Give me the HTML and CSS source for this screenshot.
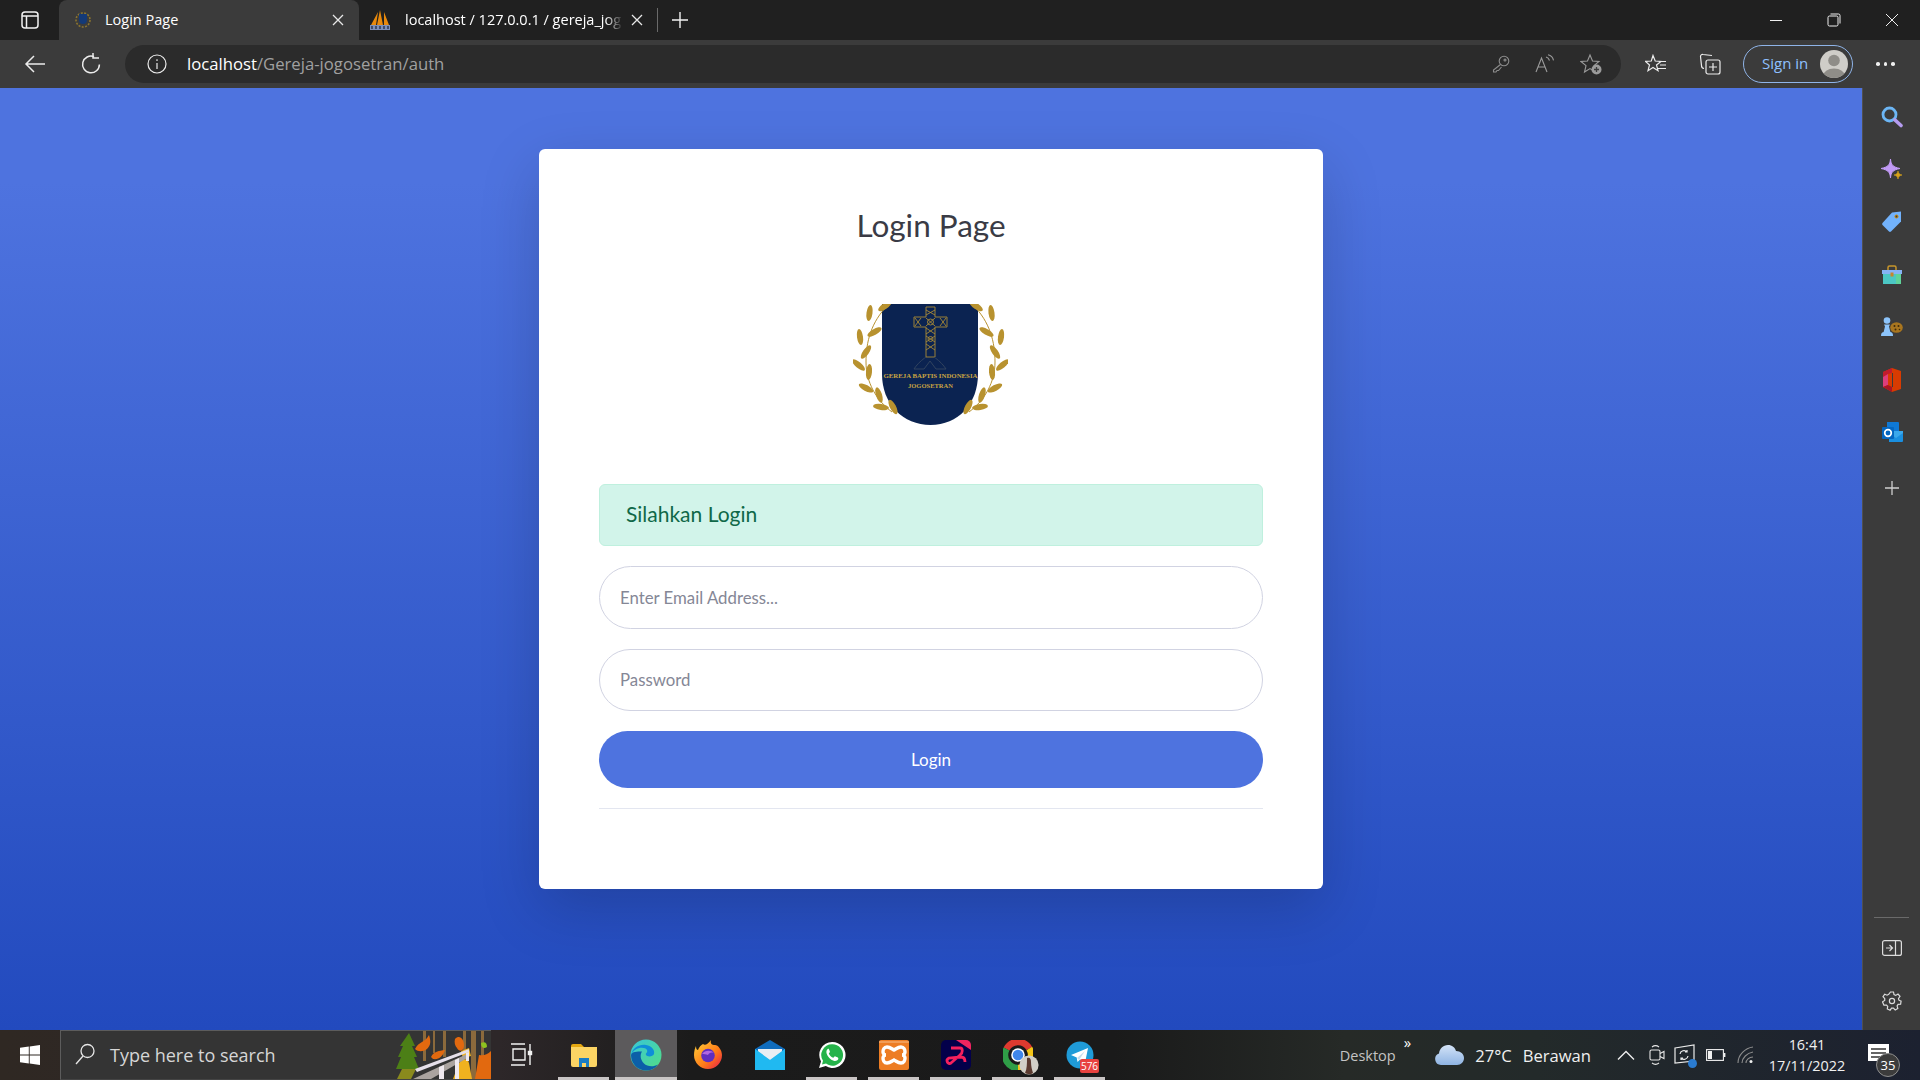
FILE: index.html
```html
<!DOCTYPE html>
<html lang="id">
<head>
  <meta charset="UTF-8" />
  <meta name="viewport" content="width=device-width, initial-scale=1" />
  <title>Login Page</title>
  <link rel="stylesheet" href="styles.css">
</head>

<body>
  <!-- Tab strip -->
  <div class="tabstrip">
    <div class="tab-menu">
      <svg width="18" height="18" viewBox="0 0 18 18" fill="none" stroke="#f2f2f2" stroke-width="1.5"><rect x="1" y="1" width="16" height="16" rx="3"/><path d="M1 5h16M5.500 5v12"/></svg>
    </div>
    <div class="tab tab-active">
      <svg class="tab-icon" width="16" height="16" viewBox="0 0 16 16"><circle cx="8" cy="8" r="7" fill="none" stroke="#8a7430" stroke-dasharray="2 1.400" stroke-width="1.600"/><path d="M4 2h8v6a4 4 0 0 1-8 0z" fill="#143a78"/></svg>
      <span class="tab-title">Login Page</span>
      <svg class="tab-close" width="12" height="12" viewBox="0 0 12 12" stroke="#e8e8e8" stroke-width="1.300"><path d="M1 1l10 10M11 1L1 11"/></svg>
    </div>
    <div class="tab tab-back">
      <svg class="tab-icon" width="22" height="22" viewBox="0 0 22 22"><path d="M2 16 9 3l-2 13zM8 16 11 1l3 15zM15 3l5 13h-5z" fill="#e8890c"/><path d="M1 16h20v5H1z" fill="#7d8fb8"/><path d="M3 17v3M7 17v3M11 17v3M15 17v3M19 17v3" stroke="#26324f" stroke-width="1.400"/></svg>
      <span class="tab-title tab-title-fade">localhost / 127.0.0.1 / gereja_jog</span>
      <svg class="tab-close" width="12" height="12" viewBox="0 0 12 12" stroke="#e8e8e8" stroke-width="1.300"><path d="M1 1l10 10M11 1L1 11"/></svg>
    </div>
    <div class="tab-sep"></div>
    <div class="tab-new">
      <svg width="18" height="18" viewBox="0 0 18 18" stroke="#f2f2f2" stroke-width="1.400"><path d="M9 1v16M1 9h16"/></svg>
    </div>
    <div class="window-btns">
      <svg width="14" height="14" viewBox="0 0 14 14" stroke="#f0f0f0" stroke-width="1"><path d="M1 7.500h12"/></svg>
      <svg width="14" height="14" viewBox="0 0 14 14" fill="none" stroke="#f0f0f0" stroke-width="1"><rect x="1" y="3" width="10" height="10" rx="1.500"/><path d="M3.500 1h8a1.500 1.500 0 0 1 1.500 1.500v8"/></svg>
      <svg width="14" height="14" viewBox="0 0 14 14" stroke="#f0f0f0" stroke-width="1"><path d="M1 1l12 12M13 1L1 13"/></svg>
    </div>
  </div>

  <!-- Toolbar -->
  <div class="toolbar">
    <div class="nav-btn">
      <svg width="22" height="20" viewBox="0 0 22 20" fill="none" stroke="#ececec" stroke-width="1.500"><path d="M21 10H2M10 2l-8 8 8 8"/></svg>
    </div>
    <div class="nav-btn">
      <svg width="20" height="22" viewBox="0 0 20 22" fill="none" stroke="#ececec" stroke-width="1.500"><path d="M13 3.600A8.400 8.400 0 1 0 18.400 11.500"/><path d="M12 0v5h6"/></svg>
    </div>
    <div class="address">
      <svg class="address-info" width="20" height="20" viewBox="0 0 20 20" fill="none" stroke="#ececec" stroke-width="1.200"><circle cx="10" cy="10" r="9"/><path d="M10 9v6M10 5.200v1.800"/></svg>
      <span class="url"><span class="url-host">localhost</span>/Gereja-jogosetran/auth</span>
      <div class="address-icons">
        <svg width="18" height="18" viewBox="0 0 18 18" fill="none" stroke="#8d8d8d" stroke-width="1.100"><circle cx="12" cy="6" r="4.800"/><path d="M8.500 9.500 1.500 15v2h2.500l1-1.500h1.500l3-3.500"/><circle cx="13" cy="5" r="1"/></svg>
        <svg width="20" height="20" viewBox="0 0 20 20" fill="none" stroke="#9b9b9b" stroke-width="1.100"><path d="M1 18 6.500 4 12 18M3 13h7"/><path d="M11 3c2 .5 3 2 3.500 3.500M13 .8c3 .6 5 3 5.500 5.500"/></svg>
        <svg width="22" height="22" viewBox="0 0 22 22" fill="none" stroke="#9b9b9b" stroke-width="1.100"><path d="M10 2l2.500 6 6.500.5-5 4.200 1.500 6.300-5.500-3.400L4.500 19 6 12.700 1 8.500 7.500 8z"/><circle cx="16.500" cy="16.500" r="5" fill="#9b9b9b" stroke="none"/><path d="M16.500 14v5M14 16.500h5" stroke="#3b3b3b" stroke-width="1.300"/></svg>
      </div>
    </div>
    <div class="tool-btn tool-first">
      <svg width="22" height="20" viewBox="0 0 22 20" fill="none" stroke="#ececec" stroke-width="1.200"><path d="M8 1.500l2.200 5.500 5.800.4-4.500 3.600 1.500 5.700-5-3.200-5 3.200 1.500-5.700L0.500 7.400l5.800-.4z"/><path d="M14 7.500h7M15 11h6M12.500 14.500H21"/></svg>
    </div>
    <div class="tool-btn">
      <svg width="22" height="22" viewBox="0 0 22 22" fill="none" stroke="#ececec" stroke-width="1.200"><path d="M13 2.500 4 1.500a2 2 0 0 0-2.500 2l1 9a3 3 0 0 0 2.500 3"/><rect x="7" y="7" width="14" height="14" rx="2"/><path d="M14 10v8M10 14h8"/></svg>
    </div>
    <div class="signin">
      <span class="signin-text">Sign in</span>
      <svg class="avatar" width="28" height="28" viewBox="0 0 28 28"><defs><clipPath id="av"><circle cx="14" cy="14" r="14"/></clipPath></defs><circle cx="14" cy="14" r="14" fill="#cfcdc8"/><g clip-path="url(#av)" fill="#8f8d88"><circle cx="14" cy="10.500" r="5.800"/><ellipse cx="14" cy="26" rx="11" ry="7.500"/></g></svg>
    </div>
    <div class="more-btn"><i></i><i></i><i></i></div>
  </div>

  <div class="middle">
    <!-- Login page -->
    <main class="page">
      <div class="card">
        <h1 class="card-title">Login Page</h1>
        <svg class="logo" width="155" height="121" viewBox="0 0 155 121">
          <defs>
            <ellipse id="leaf" rx="3" ry="8" fill="#b8922f"/>
            <g id="laurel">
              <use href="#leaf" transform="translate(16.500 9) rotate(8)"/>
              <use href="#leaf" transform="translate(21.500 28) rotate(60)"/>
              <use href="#leaf" transform="translate(7 33) rotate(-8)"/>
              <use href="#leaf" transform="translate(13 48) rotate(35)"/>
              <use href="#leaf" transform="translate(5.500 61) rotate(-50)"/>
              <use href="#leaf" transform="translate(16 68) rotate(5)"/>
              <use href="#leaf" transform="translate(13 84) rotate(-62)"/>
              <use href="#leaf" transform="translate(26 91) rotate(-18)"/>
              <use href="#leaf" transform="translate(28 103) rotate(-82)"/>
              <use href="#leaf" transform="translate(40 103) rotate(-28)"/>
              <use href="#leaf" transform="translate(32 2) rotate(55)"/>
              <path d="M35 1C18 18 13 38 13 58c0 20 10 38 26 50" fill="none" stroke="#b8922f" stroke-width="1"/>
            </g>
          </defs>
          <path d="M29 0H125V70C125 100 105 121 77.500 121C50 121 29 100 29 70Z" fill="#0b2351"/>
          <use href="#laurel"/>
          <use href="#laurel" transform="translate(155 0) scale(-1 1)"/>
          <g fill="none" stroke="#a98a35" stroke-width=".9">
            <path d="M73 3h9v10h12v10H82v30h-9V23H61V13h12z"/>
            <path d="M73 6l9 5M82 6l-9 5M62 14l6 8M68 14l-6 8M87 14l6 8M93 14l-6 8M73 14l9 8M82 14l-9 8M73 24l9 6M82 24l-9 6M73 32l9 6M82 32l-9 6M73 40l9 6M82 40l-9 6"/>
            <circle cx="77.500" cy="18" r="3"/><circle cx="77.500" cy="35" r="2.500"/>
          </g>
          <path d="M73 53c-4 3-8 6-12 12h10l6-8 6 8h10c-4-6-8-9-12-12" fill="none" stroke="#31435f" stroke-width="1"/>
          <text class="logo-text" x="77.500" y="74" text-anchor="middle" textLength="94" lengthAdjust="spacingAndGlyphs">GEREJA BAPTIS INDONESIA</text>
          <text class="logo-text" x="77.500" y="84" text-anchor="middle" textLength="45" lengthAdjust="spacingAndGlyphs">JOGOSETRAN</text>
        </svg>
        <div class="alert-ok">Silahkan Login</div>
        <form class="login-form" onsubmit="return false">
          <input class="field" type="text" placeholder="Enter Email Address...">
          <input class="field" type="password" placeholder="Password">
          <button class="btn-login" type="submit">Login</button>
        </form>
        <hr class="divider">
      </div>
    </main>

    <!-- Edge sidebar -->
    <aside class="sidebar">
      <div class="side-item">
        <svg width="22" height="22" viewBox="0 0 22 22" fill="none"><circle cx="8.500" cy="8.500" r="6.500" stroke="#6cb6f5" stroke-width="2.800"/><path d="M14 14l6 5.500" stroke="#b59cf0" stroke-width="3.600" stroke-linecap="round"/></svg>
      </div>
      <div class="side-item">
        <svg width="22" height="22" viewBox="0 0 22 22"><path d="M9.500 0C10 6 12 8 19 9.500 12 11 10 13 9.500 19 9 13 7 11 0 9.500 7 8 9 6 9.500 0z" fill="#c19af5" stroke="#c19af5"/><path d="M17 12c.4 2.400 1.400 3.400 4 4-2.600.6-3.600 1.600-4 4-.4-2.400-1.400-3.400-4-4 2.600-.6 3.600-1.600 4-4z" fill="#d9a21b" stroke="#d9a21b" stroke-width=".6"/></svg>
      </div>
      <div class="side-item">
        <svg width="22" height="22" viewBox="0 0 22 22"><path d="M11 1.500 20 0.500v10L10 20.500a1.500 1.500 0 0 1-2 0L1.500 14a1.500 1.500 0 0 1 0-2z" fill="#72b2fb"/><circle cx="15.500" cy="5.500" r="2" fill="#c78a13"/><circle cx="15.500" cy="5.500" r=".9" fill="#2c3b52"/></svg>
      </div>
      <div class="side-item">
        <svg width="22" height="20" viewBox="0 0 22 20"><path d="M7 5V2.500A1.500 1.500 0 0 1 8.500 1h5A1.500 1.500 0 0 1 15 2.500V5" fill="none" stroke="#c8962b" stroke-width="1.500"/><path d="M1 5h20v4H1z" fill="#86b3f5"/><path d="M2 9h18v10H2z" fill="#4cc7c4"/><path d="M15 9h5v10h-5z" fill="#5fd39a"/><rect x="9.500" y="7.500" width="3" height="4" fill="#c8862b"/></svg>
      </div>
      <div class="side-item">
        <svg width="23" height="20" viewBox="0 0 23 20"><circle cx="7" cy="3.500" r="3.300" fill="#8cc4fb"/><path d="M4 7.500h6l-1 2 1.500 6H3.500l1.500-6z" fill="#8cc4fb"/><path d="M1 19c0-3 1-4 3-4h6c2 0 3 1 3 4z" fill="#8cc4fb"/><ellipse cx="16.500" cy="10.500" rx="6.300" ry="5.300" fill="#a9761f"/><circle cx="14.500" cy="9" r="1" fill="#3f2a0c"/><circle cx="18.500" cy="9" r="1" fill="#3f2a0c"/><circle cx="15.500" cy="12.500" r="1" fill="#3f2a0c"/><circle cx="19.500" cy="12.500" r=".8" fill="#3f2a0c"/></svg>
      </div>
      <div class="side-item">
        <svg width="20" height="24" viewBox="0 0 20 24"><path d="M10 0 1 4v15l9 5 9-3V3z" fill="#d83b01"/><path d="M10 0 1 4v15l5-2V6l4-1z" fill="#c11c2d"/><path d="M1 9l5-3v11l-5 2z" fill="#dc3e7b"/><path d="M6 17l4 2v5l-9-5z" fill="#a91526"/><path d="M10 5h1v14h-1z" fill="#3b3b3b"/></svg>
      </div>
      <div class="side-item">
        <svg width="22" height="22" viewBox="0 0 22 22"><path d="M6 1h11a1 1 0 0 1 1 1v8H6z" fill="#0f78d4"/><path d="M8 10h14v10a1 1 0 0 1-1 1H8z" fill="#1a8fe0"/><path d="M8 12l7 5 7-5v-2H8z" fill="#3aa8ec"/><rect x="1" y="6" width="12" height="12" rx="1" fill="#0466c0"/><circle cx="7" cy="12" r="3.300" fill="none" stroke="#fff" stroke-width="1.700"/></svg>
      </div>
      <div class="side-item side-plus">
        <svg width="16" height="16" viewBox="0 0 16 16" stroke="#cfcfcf" stroke-width="1.300"><path d="M8 1v14M1 8h14"/></svg>
      </div>
      <div class="side-bottom">
        <div class="side-sep"></div>
        <div class="side-item">
          <svg width="20" height="16" viewBox="0 0 20 16" fill="none" stroke="#dcdcdc" stroke-width="1.200"><rect x=".6" y=".6" width="18.800" height="14.800" rx="2"/><path d="M13.500 1v14M4 8h6M7.500 5l3 3-3 3"/></svg>
        </div>
        <div class="side-item">
          <svg width="20" height="20" viewBox="0 0 20 20" fill="none" stroke="#dcdcdc" stroke-width="1.200"><circle cx="10" cy="10" r="2.600"/><path d="M8.500 1h3l.5 2.600 1.700.8 2.300-1.300 2 2.200-1.500 2.200.4 1.700 2.200 1-.5 2.900-2.500.3-1 1.500.7 2.500-2.600 1.500-1.800-1.800-1.800.1-1.500 2-2.800-1.200.4-2.600-1.200-1.300-2.600.1L.5 10.800l2.200-1.400.1-1.800L1 5.700l1.700-2.500 2.400 1 1.600-.8z"/></svg>
        </div>
      </div>
    </aside>
  </div>

  <!-- Windows taskbar -->
  <footer class="taskbar">
    <div class="start">
      <svg width="20" height="20" viewBox="0 0 20 20" fill="#fff"><path d="M0 2.800 8.800 1.600v8H0zM9.700 1.500 20 0v9.600H9.700zM0 10.500h8.800v8L0 17.200zM9.700 10.500H20V20L9.700 18.500z"/></svg>
    </div>
    <div class="search">
      <svg class="search-glass" width="20" height="24" viewBox="0 0 20 24" fill="none" stroke="#e6e6e6" stroke-width="1.300"><circle cx="12.500" cy="8" r="6.500"/><path d="M8 13 1 21"/></svg>
      <span class="search-text">Type here to search</span>
      <svg class="search-art" width="96" height="48" viewBox="0 0 96 48">
        <path d="M28 0h3v30h-3zM38 0h2v22h-2zM48 0h3v26h-3zM68 0h3v26h-3zM76 0h5v48h-5zM86 0h3v48h-3z" fill="#8b6a3c"/>
        <path d="M20 18c4-8 10-6 14-14 2 6 2 10-2 14-4 3-9 3-12 0zM36 26c3-6 8-6 14-7-2 6-6 10-12 9zM60 8c5-5 9 1 9 6 0 7-5 7-7 3-2-2-3-6-2-9zM84 24c4 1 8 0 12-4v28H80z" fill="#e2690f"/>
        <path d="M64 32c4-4 8-6 10 0l3 16H58z" fill="#f0b21f"/>
        <path d="M66 20l8-3 2 8-8 2z" fill="#f0b21f"/>
        <path d="M86 12c4-2 6 0 6 4-3 2-6 1-6-4z" fill="#8dc21f"/>
        <path d="M14 2l6 13h-3l5 11h-3l5 12H1l5-12H3l5-11H5z" fill="#4c7f16"/>
        <path d="M2 48 7 38h14l-5 10z" fill="#8a8a1d"/>
        <path d="M18 48 74 22v4L36 48z" fill="#aaa39f"/>
        <path d="M20 38 74 18v3L22 41z" fill="#e6e0ea"/>
        <path d="M44 36v12h5V34zM60 29v19h4V27zM71 22v8h3V21z" fill="#eee8ee"/>
      </svg>
    </div>
    <div class="task-item">
      <svg width="24" height="24" viewBox="0 0 24 24" fill="none" stroke="#f2f2f2" stroke-width="1.400"><path d="M1 1h14M3 6h12v11H3zM1 22h14M20 1v7M20 12v10"/><rect x="18.500" y="8.500" width="3" height="3" fill="#f2f2f2"/></svg>
    </div>
    <div class="task-item task-open">
      <svg width="28" height="26" viewBox="0 0 28 26"><path d="M1 4a2 2 0 0 1 2-2h8l3 3H1z" fill="#e5a711"/><path d="M1 5h26v18a2 2 0 0 1-2 2H3a2 2 0 0 1-2-2z" fill="#fcd464"/><path d="M9 16h10v9h-3v-4h-4v4H9z" fill="#1a7dc4"/></svg>
    </div>
    <div class="task-item task-open task-active">
      <svg width="32" height="32" viewBox="0 0 32 32"><defs><linearGradient id="edgeg" x1="0" y1="0" x2="1" y2="1"><stop offset="0" stop-color="#38c6d8"/><stop offset="1" stop-color="#53de83"/></linearGradient></defs><circle cx="16" cy="16" r="15.500" fill="url(#edgeg)"/><path d="M1 17C2 8 10 5 16 6c6 1 9 5 8 9-1 3-7 3-8 1s2-2 1-5C15 7 3 8 1 17z" fill="#0f8ed8"/><path d="M1 16c0 9 7 15.500 15 15.500 5 0 9-2 12-6-5 3-11 2-14-1-4-4-4-9-2-12-5 0-10 0-11 3.500z" fill="#0c5fa8"/></svg>
    </div>
    <div class="task-item">
      <svg width="30" height="30" viewBox="0 0 30 30"><defs><linearGradient id="foxg" x1="0" y1="0" x2="1" y2="1"><stop offset="0" stop-color="#ffd43a"/><stop offset=".6" stop-color="#ff7a18"/><stop offset="1" stop-color="#e5174f"/></linearGradient></defs><path d="M15 29A14 14 0 0 1 1 15C1 11 2 8 3 6c0 3 1 4 2 4 1-3 3-5 5-6 2 2 5 0 8-4-1 4 1 5 4 5s7 5 7 10a14 14 0 0 1-14 14z" fill="url(#foxg)"/><circle cx="15" cy="15.500" r="6.800" fill="#5f2ec0"/><path d="M9 14c3-4 9-4 12-1-3-1-5 0-6 2-2-1-4-1-6-1z" fill="#b067e0"/></svg>
    </div>
    <div class="task-item">
      <svg width="32" height="30" viewBox="0 0 32 30"><path d="M1 9 16 0l15 9v4H1z" fill="#0f6cbd"/><path d="M4 9h24v8L16 23 4 17z" fill="#e9eef3"/><path d="M1 9l15 11L31 9v21H1z" fill="#19b0ef"/><path d="M1 30V9l15 11 15-11v21z" fill="#27c1f4" opacity=".5"/></svg>
    </div>
    <div class="task-item task-open">
      <svg width="28" height="28" viewBox="0 0 28 28"><path d="M14 1A13 13 0 0 0 3 20.500L1 27l6.800-1.900A13 13 0 1 0 14 1z" fill="#fff"/><path d="M14 3.300A10.700 10.700 0 0 0 5 19.800l-1 3.800 4-1A10.700 10.700 0 1 0 14 3.300z" fill="#25b34a"/><path d="M10 7.800c-1.500 1-2 2.800-1.300 5 1 3 3.700 6 7 7 2 .5 3.700 0 4.500-1.500.3-.8.200-1.400-.3-1.700l-2.500-1.200c-.5-.2-.9 0-1.200.4l-.8 1c-2-.7-3.700-2.400-4.600-4.400l.8-.9c.3-.4.400-.8.200-1.200L10.800 8c-.2-.4-.5-.4-.8-.2z" fill="#fff"/></svg>
    </div>
    <div class="task-item task-open">
      <svg width="30" height="30" viewBox="0 0 30 30"><rect width="30" height="30" rx="2" fill="#ed7d24"/><path d="M0 2h30" stroke="#f5b27b" stroke-width="1.200"/><path d="M8 7c3 0 5 2 7 3 2-1 4-3 7-3 3 0 4 3 4 5 0 1-1 3-3 3 2 0 3 2 3 3 0 2-1 5-4 5-3 0-5-2-7-3-2 1-4 3-7 3-3 0-4-3-4-5 0-1 1-3 3-3-2 0-3-2-3-3 0-2 1-5 4-5z" fill="none" stroke="#fff" stroke-width="3.400"/></svg>
    </div>
    <div class="task-item task-open">
      <svg width="30" height="30" viewBox="0 0 30 30"><rect width="30" height="30" rx="5" fill="#03004a"/><path d="M15 0h10a5 5 0 0 1 5 5v5z" fill="#f0245f"/><path d="M10 8h9c3 0 3 5 0 7l-9 8c-3 2-6-3-2-5l12-1c3 0 4 2 4 5" fill="none" stroke="#f5205d" stroke-width="2.800"/></svg>
    </div>
    <div class="task-item task-open">
      <svg width="30" height="30" viewBox="0 0 30 30" fill="none"><path d="M3.500 9A13 13 0 0 1 26.300 8.500" stroke="#de3a2f" stroke-width="6.500"/><path d="M26.300 8.500A13 13 0 0 1 15 28" stroke="#f5c518" stroke-width="6.500"/><path d="M15 28A13 13 0 0 1 3.500 9" stroke="#2f9e47" stroke-width="6.500"/><circle cx="15" cy="15" r="6.800" fill="#fff"/><circle cx="15" cy="15" r="5.300" fill="#3f86ea"/></svg>
      <svg class="chrome-avatar" width="20" height="20" viewBox="0 0 20 20"><circle cx="10" cy="10" r="9.600" fill="#d2cfc7"/><path d="M8 3c3-1 4 1 4 4 0 4 1 8 2 11-3 2-6 1-8 0 2-4 2-10 2-15z" fill="#5b3a30"/></svg>
    </div>
    <div class="task-item task-open">
      <svg width="28" height="28" viewBox="0 0 28 28"><circle cx="14" cy="14" r="13.500" fill="#1f9bd8"/><path d="M5 14 22 7l-3 15-5-3.500-2.500 2.500-.8-4.500z" fill="#fff"/><path d="M11 17l8-7-6 9z" fill="#c7dceb"/></svg>
      <span class="badge-count">576</span>
    </div>

    <div class="tray">
      <span class="tray-desktop">Desktop</span>
      <span class="tray-chevron">»</span>
      <svg class="tray-cloud" width="32" height="22" viewBox="0 0 32 22"><defs><linearGradient id="cloudg" x1="0" y1="0" x2="0" y2="1"><stop offset="0" stop-color="#d3e3f7"/><stop offset="1" stop-color="#8fb4e3"/></linearGradient></defs><path d="M8 21a6 6 0 0 1-2-11.600C6.500 5 10 1 15 1c4 0 7 2.500 8 6 4.500 0 8 3 8 7s-3 7-7 7z" fill="url(#cloudg)"/></svg>
      <span class="tray-temp">27°C</span>
      <span class="tray-weather">Berawan</span>
      <svg class="tray-caret" width="18" height="10" viewBox="0 0 18 10" fill="none" stroke="#f0f0f0" stroke-width="1.300"><path d="M1 9.500l8-8 8 8"/></svg>
      <svg class="tray-meet" width="16" height="22" viewBox="0 0 16 22" fill="none" stroke="#e8e8e8" stroke-width="1.100"><rect x="1" y="6" width="10" height="10" rx="1.500"/><path d="M11 9.500l4-2v7l-4-2M3 3c2-1.500 5-1.500 7 0M3 19c2 1.500 5 1.500 7 0"/></svg>
      <span class="tray-sync">
        <svg width="21" height="22" viewBox="0 0 21 22" fill="none" stroke="#ececec" stroke-width="1.200"><path d="M1 4l19-3v16L1 19z"/><path d="M6 10a4 4 0 0 1 7-2M14 12a4 4 0 0 1-7 2M13 6v2h-2M7 16v-2h2"/></svg>
        <i class="sync-dot"></i>
      </span>
      <svg class="tray-battery" width="20" height="12" viewBox="0 0 20 12" fill="none" stroke="#f0f0f0" stroke-width="1.100"><rect x=".6" y=".6" width="16.800" height="10.800"/><rect x="2" y="2" width="4" height="8" fill="#f0f0f0" stroke="none"/><path d="M18.500 4v4" stroke-width="1.800"/></svg>
      <svg class="tray-wifi" width="18" height="18" viewBox="0 0 18 18" fill="none" stroke="#8d8d8d" stroke-width="1.100"><path d="M1 17C1 9 8 2 16 1M5 17c0-5 5-10 11-11M9 17c0-3 3-6 7-6"/><circle cx="14" cy="15.500" r="1.500" fill="#f0f0f0" stroke="none"/></svg>
      <div class="clock">
        <span>16:41</span>
        <span>17/11/2022</span>
      </div>
      <div class="notif">
        <svg width="21" height="20" viewBox="0 0 21 20"><path d="M0 0h21v17H0z" fill="#fff"/><path d="M3 5h15M3 9h15M3 13h10" stroke="#333" stroke-width="1.300"/></svg>
        <span class="notif-count">35</span>
      </div>
    </div>
  </footer>
</body>
</html>
```

FILE: styles.css
```css
* {
  box-sizing: border-box;
}

html, body {
  height: 100%;
}

body {
  margin: 0;
  width: 1920px;
  height: 1080px;
  overflow: hidden;
  display: flex;
  flex-direction: column;
  font-family: 'Open Sans', 'Noto Sans', sans-serif;
  background: #1a1a1a;
}

svg {
  display: block;
  flex-shrink: 0;
}

/* tab strip */
.tabstrip {
  height: 40px;
  background: #202020;
  display: flex;
  align-items: stretch;
  color: #fff;
}

.tab-menu {
  width: 59px;
  display: flex;
  align-items: center;
  justify-content: center;
}

.tab {
  width: 300px;
  display: flex;
  align-items: center;
  padding: 0 15px 0 12px;
  font-size: 14.500px;
}

.tab-active {
  background: #3b3b3b;
  border-radius: 8px 8px 0 0;
  padding-left: 16px;
}

.tab-icon {
  margin-right: 14px;
}

.tab-back {
  width: 297px;
  padding: 0 13px 0 10px;
}

.tab-title {
  flex: 1;
  white-space: nowrap;
  margin-top: -2px;
}

.tab-title-fade {
  -webkit-mask-image: linear-gradient(90deg, #000 92%, transparent 100%);
  mask-image: linear-gradient(90deg, #000 92%, transparent 100%);
}

.tab-close {
  margin-left: 8px;
}

.tab-sep {
  width: 1px;
  height: 24px;
  align-self: center;
  background: #6a6a6a;
  margin-left: 1px;
}

.tab-new {
  width: 44px;
  display: flex;
  align-items: center;
  justify-content: center;
}

.window-btns {
  margin-left: auto;
  display: flex;
  align-items: center;
  gap: 44px;
  padding-right: 21px;
}

/* toolbar */
.toolbar {
  height: 48px;
  background: #3b3b3b;
  display: flex;
  align-items: center;
  padding-left: 7px;
  flex-shrink: 0;
}

.nav-btn {
  width: 56px;
  display: flex;
  justify-content: center;
}

.address {
  width: 1496px;
  height: 38px;
  margin-left: 6px;
  border-radius: 19px;
  background: #2b2b2b;
  display: flex;
  align-items: center;
  padding-left: 22px;
  font-size: 16.700px;
  color: #a0a0a0;
}

.address-info {
  margin-right: 20px;
}

.url {
  white-space: nowrap;
  margin-top: -2px;
}

.url-host {
  color: #fff;
}

.address-icons {
  margin-left: auto;
  display: flex;
  align-items: center;
  gap: 25px;
  padding-right: 19px;
}

.tool-btn {
  width: 54px;
  display: flex;
  justify-content: center;
}

.tool-first {
  margin-left: 8px;
}

.signin {
  width: 110px;
  height: 38px;
  margin-left: 6px;
  border: 1.500px solid #8fb4e8;
  border-radius: 19px;
  display: flex;
  align-items: center;
  justify-content: space-between;
  padding: 0 4px 0 18px;
  color: #8fc0ff;
  font-size: 15px;
}

.signin-text {
  margin-top: -2px;
}

.more-btn {
  display: flex;
  gap: 4px;
  margin-left: 23px;
}

.more-btn i {
  width: 3.500px;
  height: 3.500px;
  border-radius: 50%;
  background: #efefef;
}

/* page */
.middle {
  flex: 1;
  display: flex;
  min-height: 0;
}

.page {
  flex: 1;
  background: linear-gradient(180deg, #4e73df 10%, #224abe 100%);
  padding-top: 61px;
  display: flex;
  justify-content: center;
  align-items: flex-start;
}

.card {
  width: 784px;
  height: 740px;
  background: #fff;
  border-radius: 6px;
  box-shadow: 0 20px 60px rgba(0, 0, 0, 0.175);
  padding: 60px;
  display: flex;
  flex-direction: column;
  align-items: center;
  font-family: 'Lato', 'Noto Sans', sans-serif;
}

.card-title {
  margin: 0;
  font-size: 31.500px;
  line-height: 33px;
  font-weight: 400;
  color: #3a3b45;
}

.logo {
  margin: 62px 2px 59px 0;
}

.logo-text {
  font-family: 'Liberation Serif', serif;
  font-weight: 700;
  font-size: 5.800px;
  fill: #c9a441;
}

.alert-ok {
  width: 100%;
  height: 62px;
  padding: 0 26px 3px;
  display: flex;
  align-items: center;
  background: #d2f4ea;
  border: 1px solid #bff0de;
  border-radius: 6px;
  color: #0f6848;
  font-size: 21px;
}

.login-form {
  width: 100%;
  margin-top: 20px;
  display: flex;
  flex-direction: column;
  gap: 20px;
}

.field {
  width: 100%;
  height: 63px;
  padding: 0 20px;
  border: 1px solid #d1d3e2;
  border-radius: 32px;
  background: #fff;
  font-family: inherit;
  font-size: 16.800px;
  color: #6e707e;
  outline: none;
}

.field + .field {
  height: 62px;
  padding-bottom: 2px;
}

.field::placeholder {
  color: #858796;
  opacity: 1;
}

.btn-login {
  width: 100%;
  height: 57px;
  border: none;
  border-radius: 29px;
  background: #4e73df;
  color: #fff;
  font-family: inherit;
  font-size: 17px;
  font-weight: 400;
}

.divider {
  width: 100%;
  margin: 20px 0;
  border: 0;
  border-top: 1px solid #e3e6f0;
}

/* edge sidebar */
.sidebar {
  width: 58px;
  background: #3b3b3b;
  border-left: 1px solid #505050;
  display: flex;
  flex-direction: column;
  align-items: center;
  padding-top: 3px;
}

.side-item {
  width: 100%;
  height: 52.500px;
  flex-shrink: 0;
  display: flex;
  align-items: center;
  justify-content: center;
}

.side-plus {
  margin-top: 3px;
}

.side-bottom {
  width: 100%;
  margin-top: auto;
  display: flex;
  flex-direction: column;
  align-items: center;
  padding-bottom: 3px;
}

.side-sep {
  width: 35px;
  height: 1px;
  background: #6a6a6a;
  margin-bottom: 4px;
}

/* taskbar */
.taskbar {
  height: 50px;
  flex-shrink: 0;
  display: flex;
  align-items: stretch;
  color: #f0f0f0;
  background: linear-gradient(90deg, #2f2823 0, #2d2729 26%, #1b1b1b 36%, #1a1a1a 58%, #262a27 70%, #232a2a 80%, #1c2130 100%);
}

.start {
  width: 60px;
  display: flex;
  align-items: center;
  justify-content: center;
}

.search {
  width: 431px;
  background: #343434;
  border: 1px solid #5c5c5c;
  border-bottom-color: #444;
  border-right: 0;
  display: flex;
  align-items: center;
  padding-left: 14px;
}

.search-glass {
  margin-right: 15px;
}

.search-text {
  font-size: 18px;
  color: #d6d6d6;
  white-space: nowrap;
}

.search-art {
  margin-left: auto;
}

.task-item {
  position: relative;
  width: 62px;
  display: flex;
  align-items: center;
  justify-content: center;
}

.task-open::after {
  content: '';
  position: absolute;
  left: 5px;
  right: 6px;
  bottom: 0;
  height: 3px;
  background: #c9c5c5;
}

.task-active {
  background: #5c5a5c;
}

.task-active::after {
  left: 0;
  right: 0;
}

.chrome-avatar {
  position: absolute;
  left: 32px;
  top: 25px;
}

.badge-count {
  position: absolute;
  left: 31px;
  top: 29px;
  width: 19px;
  height: 14px;
  border-radius: 2px;
  background: #e8423f;
  color: #fff;
  font-size: 10px;
  line-height: 14px;
  text-align: center;
}

.tray {
  margin-left: auto;
  padding-right: 22px;
  display: flex;
  align-items: center;
  white-space: nowrap;
}

.tray-desktop {
  font-size: 14.500px;
  color: #c4c4c4;
  margin-right: 8px;
}

.tray-chevron {
  align-self: flex-start;
  margin-top: 3px;
  font-size: 15px;
  line-height: 18px;
  color: #fff;
  margin-right: 22px;
}

.tray-temp,
.tray-weather {
  font-size: 16.600px;
}

.tray-cloud {
  margin-right: 10px;
}

.tray-temp {
  margin-right: 11px;
}

.tray-caret {
  margin-left: 26px;
}

.tray-meet {
  margin-left: 14px;
}

.tray-sync {
  position: relative;
  margin-left: 9px;
}

.sync-dot {
  position: absolute;
  right: -2px;
  bottom: -2px;
  width: 9px;
  height: 9px;
  border-radius: 50%;
  background: #2a7bd0;
}

.tray-battery {
  margin-left: 11px;
}

.tray-wifi {
  margin-left: 11px;
}

.clock {
  width: 90px;
  margin-left: 7px;
  display: flex;
  flex-direction: column;
  align-items: center;
  gap: 3px;
  font-size: 14.400px;
  line-height: 18px;
}

.notif {
  position: relative;
  width: 46px;
  height: 100%;
  padding: 14px 0 0 16px;
}

.notif-count {
  position: absolute;
  left: 24px;
  top: 23px;
  width: 24px;
  height: 24px;
  border-radius: 50%;
  border: 1px solid #8e8e8e;
  background: #3c3c3c;
  color: #fff;
  font-size: 13px;
  line-height: 22px;
  text-align: center;
}
```
